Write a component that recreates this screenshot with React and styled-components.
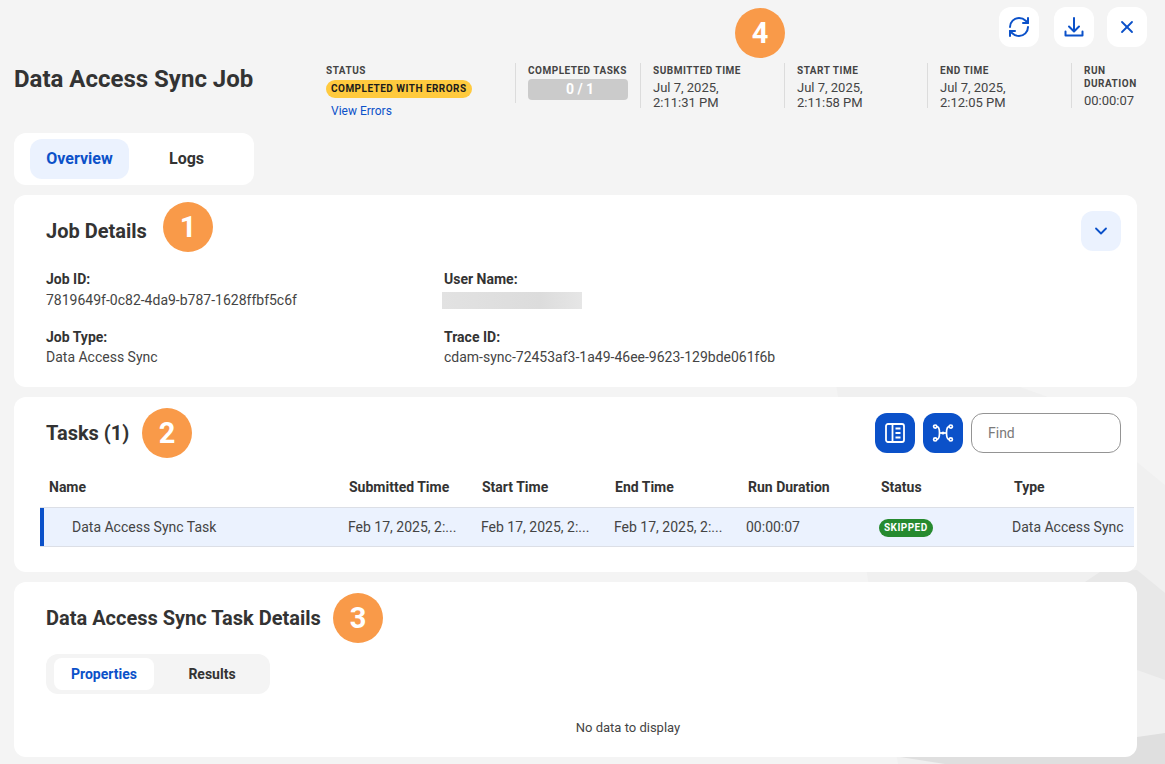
import React from "react";
import styled, { createGlobalStyle } from "styled-components";
import { RefreshCw, X, ChevronDown } from "lucide-react";

const GlobalStyle = createGlobalStyle`
  html, body {
    margin: 0;
    padding: 0;
  }
  body {
    font-family: Roboto, "Liberation Sans", sans-serif;
    color: #333;
    background-color: #f4f4f4;
  }
`;

// faint facets behind the cards, lower right of the page
const facets = encodeURIComponent(
  `<svg xmlns="http://www.w3.org/2000/svg" width="1165" height="764">
    <polygon fill="#f0f0f0" points="835,378 1020,387 1048,397 1137,462 1165,485 1165,764 898,764"/>
    <polygon fill="#e8e8e8" points="1085,582 1100,572 1137,570 1165,593 1165,680 1137,670 1085,650"/>
    <polygon fill="#dfdfdf" points="900,757 1137,737 1165,733 1165,764 945,764"/>
  </svg>`
);

const Page = styled.div`
  width: 1165px;
  height: 764px;
  overflow: hidden;
  box-sizing: border-box;
  padding: 7px 28px 0 14px;
  background: #f4f4f4 url("data:image/svg+xml,${facets}") no-repeat;
`;

const TopBar = styled.div`
  position: relative;
  display: flex;
  justify-content: flex-end;
  gap: 15px;
  margin-right: -10px;
  height: 40px;
`;

const CloseGap = styled.div`
  margin-left: -2px;
`;

const IconButton = styled.button`
  width: 40px;
  height: 40px;
  padding: 0;
  border: 0;
  border-radius: 12px;
  display: flex;
  align-items: center;
  justify-content: center;
  color: ${(p) => (p.$solid ? "#fff" : "#0b51c9")};
  background: ${(p) => (p.$solid ? "#0b51c9" : p.$tint ? "#ebf2fe" : "#fff")};
`;

const Marker = styled.div`
  position: absolute;
  left: ${(p) => p.$left}px;
  top: ${(p) => p.$top}px;
  width: 50px;
  height: 50px;
  border-radius: 50%;
  background: #f99a49;
  color: #fff;
  font-size: 29px;
  font-weight: 700;
  display: flex;
  align-items: center;
  justify-content: center;
`;

const Header = styled.div`
  display: flex;
  margin-top: 16px;
  height: 64px;
  margin-right: -28px;
`;

const Title = styled.h1`
  width: 312px;
  margin: 0;
  font-size: 24px;
  line-height: 32px;
  font-weight: 700;
  color: #333;
`;

const MetaCol = styled.div`
  box-sizing: border-box;
  width: ${(p) => p.$width}px;
  height: ${(p) => (p.$short ? 40 : 45)}px;
  padding-left: ${(p) => (p.$first ? 0 : 12)}px;
  border-left: ${(p) => (p.$first ? "0" : "1px solid #dcdcdc")};
`;

const MetaLabel = styled.div`
  font-size: 10px;
  line-height: 13px;
  margin-top: 1px;
  font-weight: 700;
  letter-spacing: 0.5px;
  color: #444;
`;

const MetaValue = styled.div`
  font-size: 13px;
  line-height: 15px;
  color: #444;
  margin-top: 3px;
`;

const StatusPill = styled.div`
  display: inline-block;
  margin-top: 3px;
  padding: 0 5px;
  height: 18px;
  line-height: 18px;
  border-radius: 9px;
  background: #ffca3e;
  color: #1c1c1c;
  font-size: 10px;
  font-weight: 700;
  letter-spacing: 0.47px;
`;

const ViewErrors = styled.a`
  display: block;
  margin: 5px 0 0 5px;
  font-size: 12px;
  line-height: 16px;
  color: #0b51c9;
`;

const Progress = styled.div`
  box-sizing: border-box;
  width: 100px;
  height: 21px;
  margin-top: 2px;
  padding-left: 4px;
  border-radius: 4px;
  background: #cbcbcb;
  color: #fff;
  font-size: 14px;
  font-weight: 700;
  line-height: 21px;
  text-align: center;
`;

const TabCard = styled.div`
  display: flex;
  align-items: center;
  width: 240px;
  height: 52px;
  box-sizing: border-box;
  padding: 0 16px;
  margin-top: 6px;
  border-radius: 12px;
  background: #fff;
`;

const MainTab = styled.div`
  width: 99px;
  height: 40px;
  line-height: 40px;
  text-align: center;
  border-radius: 12px;
  margin-right: ${(p) => (p.$active ? 8 : 0)}px;
  font-size: 16px;
  font-weight: 700;
  color: ${(p) => (p.$active ? "#0b51c9" : "#333")};
  background: ${(p) => (p.$active ? "#ebf2fe" : "transparent")};
`;

const Card = styled.section`
  position: relative;
  box-sizing: border-box;
  height: ${(p) => p.$height}px;
  margin-top: 10px;
  border-radius: 12px;
  background: #fff;
  padding: 16px 16px 0 32px;
`;

const CardHead = styled.div`
  display: flex;
  align-items: center;
  justify-content: space-between;
  height: 40px;
`;

const CardTitle = styled.h2`
  margin: 0;
  font-size: 20px;
  font-weight: 700;
  line-height: 28px;
  color: #333;
`;

const DetailGrid = styled.div`
  display: grid;
  grid-template-columns: 398px 1fr;
  row-gap: 16px;
  margin-top: 18px;
`;

const Field = styled.div`
  height: 42px;
`;

const FieldLabel = styled.div`
  font-size: 14px;
  line-height: 20px;
  font-weight: 700;
  color: #333;
`;

const FieldValue = styled.div`
  font-size: 14px;
  line-height: 20px;
  margin-top: ${(p) => (p.$close ? 0 : 1)}px;
  color: #444;
`;

const Redacted = styled.div`
  width: 140px;
  height: 17px;
  margin: 3px 0 0 -2px;
  background: linear-gradient(90deg, #e2e2e2, #dcdcdc 70%, #e6e6e6);
`;

const Tools = styled.div`
  display: flex;
  gap: 8px;
`;

const FindInput = styled.input`
  box-sizing: border-box;
  width: 150px;
  height: 40px;
  padding: 0 16px;
  border: 1px solid #949494;
  border-radius: 12px;
  font: 14px Roboto, sans-serif;
  color: #333;
  outline: none;

  &::placeholder {
    color: #7a7a7a;
    opacity: 1;
  }
`;

const Table = styled.div`
  margin: 14px -13px 0 -6px;
`;

const Cols = styled.div`
  display: grid;
  grid-template-columns: 300px repeat(5, 133px) 129px;
  align-items: center;
`;

const HeadRow = styled(Cols)`
  height: 40px;
`;

const HeadCell = styled.div`
  padding-left: 9px;
  font-size: 14px;
  font-weight: 700;
  color: #333;
`;

const BodyRow = styled(Cols)`
  box-sizing: border-box;
  height: 40px;
  border-top: 1px solid #dcdfe6;
  border-bottom: 1px solid #dcdfe6;
  background: #ebf2fe;
  box-shadow: inset 4px 0 0 #0b51c9;
`;

const BodyCell = styled.div`
  padding-left: ${(p) => (p.$name ? 32 : p.$tight ? 7 : 8)}px;
  font-size: 14px;
  color: #444;
  white-space: nowrap;
  overflow: hidden;
`;

const SkippedPill = styled.span`
  display: inline-block;
  height: 18px;
  line-height: 18px;
  padding: 0 5px;
  border-radius: 9px;
  background: #268a2f;
  color: #fff;
  font-size: 10px;
  font-weight: 700;
  letter-spacing: 0.45px;
`;

const SubTabs = styled.div`
  display: flex;
  align-items: center;
  width: 224px;
  height: 40px;
  box-sizing: border-box;
  padding: 0 8px;
  margin-top: 16px;
  border-radius: 12px;
  background: #f4f4f4;
`;

const SubTab = styled.div`
  width: 100px;
  height: 32px;
  line-height: 32px;
  text-align: center;
  border-radius: 8px;
  margin-right: ${(p) => (p.$active ? 8 : 0)}px;
  font-size: 14px;
  font-weight: 700;
  color: ${(p) => (p.$active ? "#0b51c9" : "#333")};
  background: ${(p) => (p.$active ? "#fff" : "transparent")};
`;

const Empty = styled.div`
  margin-top: 25px;
  padding-left: 89px;
  text-align: center;
  font-size: 13px;
  line-height: 18px;
  color: #444;
`;

const DownloadIcon = () => (
  <svg width="24" height="24" viewBox="0 0 24 24" fill="none" stroke="currentColor" strokeWidth="2" strokeLinecap="round" strokeLinejoin="round">
    <path d="M12 3v13" />
    <path d="M7 11.500l5 5 5-5" />
    <path d="M3.500 16.500v4h17v-4" />
  </svg>
);

const PanelIcon = () => (
  <svg width="22" height="22" viewBox="0 0 22 22" fill="none" stroke="currentColor" strokeWidth="1.8">
    <rect x="2" y="2" width="18" height="18" rx="2" />
    <path d="M8.500 2v18" />
    <path d="M11.500 6.500h5M11.500 11h5M11.500 15.500h5" />
  </svg>
);

const NodesIcon = () => (
  <svg width="22" height="22" viewBox="0 0 22 22" fill="none" stroke="currentColor" strokeWidth="1.7">
    <circle cx="3.200" cy="4.600" r="1.600" />
    <circle cx="18.800" cy="4.600" r="1.600" />
    <circle cx="3.200" cy="17.400" r="1.600" />
    <circle cx="18.800" cy="17.400" r="1.600" />
    <circle cx="11" cy="11" r="1.600" fill="currentColor" stroke="none" />
    <path d="M4.800 4.600c2 0 2.700 1.500 2.700 6.400s-.7 6.400-2.700 6.400" />
    <path d="M17.200 4.600c-2 0-2.700 1.500-2.700 6.400s.7 6.400 2.700 6.400" />
    <path d="M7.500 11h7" />
  </svg>
);

const columns = ["Name", "Submitted Time", "Start Time", "End Time", "Run Duration", "Status", "Type"];

export default function App() {
  return (
    <>
      <GlobalStyle />
      <Page>
        <TopBar>
          <Marker $left={721} $top={1}>4</Marker>
          <IconButton><RefreshCw size={24} strokeWidth={2} /></IconButton>
          <IconButton><DownloadIcon /></IconButton>
          <CloseGap><IconButton><X size={20} strokeWidth={2.2} /></IconButton></CloseGap>
        </TopBar>

        <Header>
          <Title>Data Access Sync Job</Title>
          <MetaCol $first $width={189}>
            <MetaLabel>STATUS</MetaLabel>
            <StatusPill>COMPLETED WITH ERRORS</StatusPill>
            <ViewErrors>View Errors</ViewErrors>
          </MetaCol>
          <MetaCol $width={125} $short>
            <MetaLabel>COMPLETED TASKS</MetaLabel>
            <Progress>0 / 1</Progress>
          </MetaCol>
          <MetaCol $width={144}>
            <MetaLabel>SUBMITTED TIME</MetaLabel>
            <MetaValue>Jul 7, 2025,<br />2:11:31 PM</MetaValue>
          </MetaCol>
          <MetaCol $width={143}>
            <MetaLabel>START TIME</MetaLabel>
            <MetaValue>Jul 7, 2025,<br />2:11:58 PM</MetaValue>
          </MetaCol>
          <MetaCol $width={144}>
            <MetaLabel>END TIME</MetaLabel>
            <MetaValue>Jul 7, 2025,<br />2:12:05 PM</MetaValue>
          </MetaCol>
          <MetaCol $width={90}>
            <MetaLabel>RUN<br />DURATION</MetaLabel>
            <MetaValue>00:00:07</MetaValue>
          </MetaCol>
        </Header>

        <TabCard>
          <MainTab $active>Overview</MainTab>
          <MainTab>Logs</MainTab>
        </TabCard>

        <Card $height={192}>
          <Marker $left={149} $top={7}>1</Marker>
          <CardHead>
            <CardTitle>Job Details</CardTitle>
            <IconButton $tint><ChevronDown size={20} strokeWidth={2.2} /></IconButton>
          </CardHead>
          <DetailGrid>
            <Field>
              <FieldLabel>Job ID:</FieldLabel>
              <FieldValue>7819649f-0c82-4da9-b787-1628ffbf5c6f</FieldValue>
            </Field>
            <Field>
              <FieldLabel>User Name:</FieldLabel>
              <Redacted />
            </Field>
            <Field>
              <FieldLabel>Job Type:</FieldLabel>
              <FieldValue $close>Data Access Sync</FieldValue>
            </Field>
            <Field>
              <FieldLabel>Trace ID:</FieldLabel>
              <FieldValue $close>cdam-sync-72453af3-1a49-46ee-9623-129bde061f6b</FieldValue>
            </Field>
          </DetailGrid>
        </Card>

        <Card $height={175}>
          <Marker $left={128} $top={11}>2</Marker>
          <CardHead>
            <CardTitle>Tasks (1)</CardTitle>
            <Tools>
              <IconButton $solid><PanelIcon /></IconButton>
              <IconButton $solid><NodesIcon /></IconButton>
              <FindInput placeholder="Find" />
            </Tools>
          </CardHead>
          <Table>
            <HeadRow>
              {columns.map((c) => <HeadCell key={c}>{c}</HeadCell>)}
            </HeadRow>
            <BodyRow>
              <BodyCell $name>Data Access Sync Task</BodyCell>
              <BodyCell>Feb 17, 2025, 2:...</BodyCell>
              <BodyCell>Feb 17, 2025, 2:...</BodyCell>
              <BodyCell>Feb 17, 2025, 2:...</BodyCell>
              <BodyCell $tight>00:00:07</BodyCell>
              <BodyCell $tight><SkippedPill>SKIPPED</SkippedPill></BodyCell>
              <BodyCell $tight>Data Access Sync</BodyCell>
            </BodyRow>
          </Table>
        </Card>

        <Card $height={175}>
          <Marker $left={319} $top={11}>3</Marker>
          <CardHead>
            <CardTitle>Data Access Sync Task Details</CardTitle>
          </CardHead>
          <SubTabs>
            <SubTab $active>Properties</SubTab>
            <SubTab>Results</SubTab>
          </SubTabs>
          <Empty>No data to display</Empty>
        </Card>
      </Page>
    </>
  );
}
